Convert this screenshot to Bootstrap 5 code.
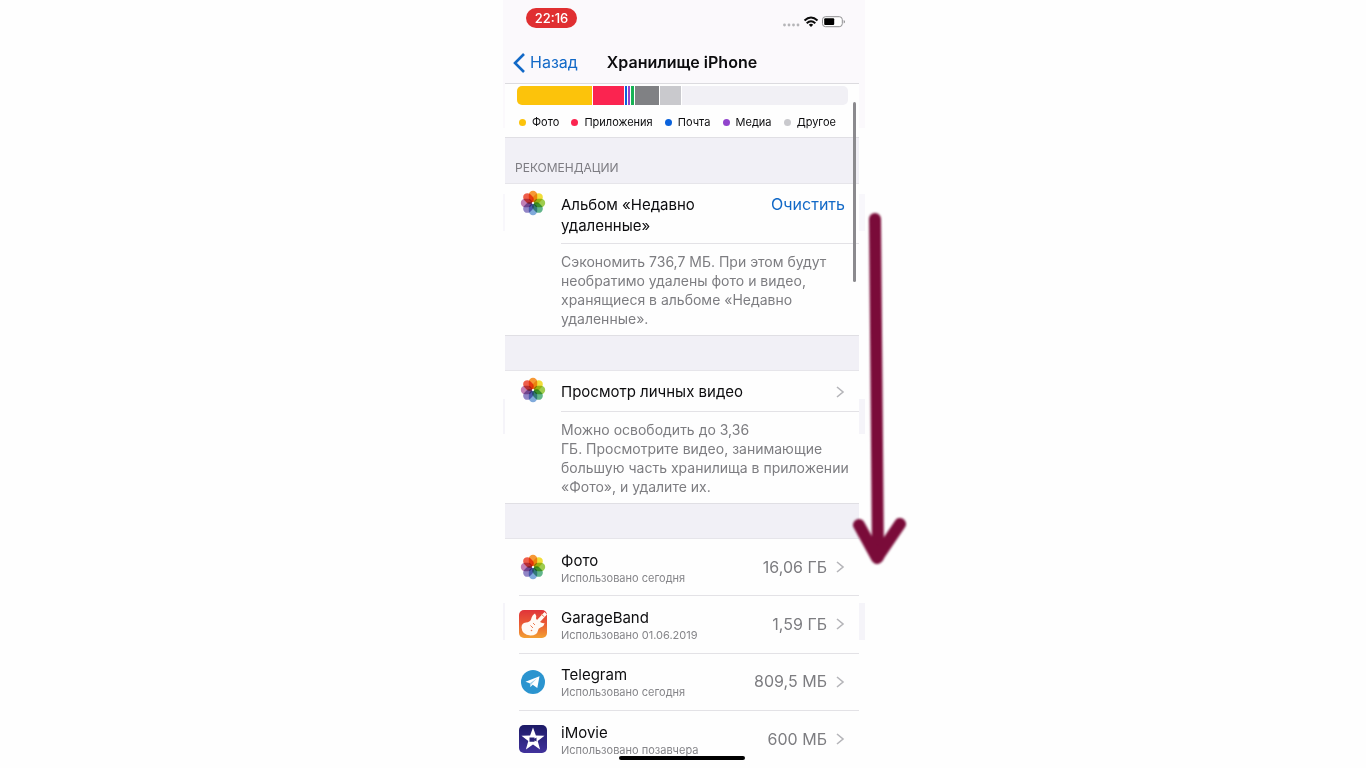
<!DOCTYPE html>
<html lang="ru">
<head>
<meta charset="utf-8">
<meta name="viewport" content="width=device-width, initial-scale=1">
<title>Хранилище iPhone</title>
<link href="https://cdn.jsdelivr.net/npm/bootstrap@5.3.0/dist/css/bootstrap.min.css" rel="stylesheet">
<style>
  body { font-family: Inter, "Liberation Sans", sans-serif; font-size: 16px; line-height: 21px; color: #0c0c0e; background: #fefefe; }
  .stage { min-height: 100vh; padding-right: 2px; }
  .phone { width: 100%; max-width: 354px; height: 100vh; min-height: 620px; }
  .phone::before { content: ""; position: absolute; inset: 0 -6px 0 -2px; z-index: -1;
    background: linear-gradient(#fbf9fc 0 128px, transparent 128px 194px, #f8f7fb 194px 231px, transparent 231px 399px, #f5f4f9 399px 434px, transparent 434px 603px, #f5f4f9 603px 640px, transparent 640px); }
  .phone-screen { background: #fefefe; }
  .top-area { background: #fbf9fc; border-bottom: 1px solid #dcdbdf; height: 84px; }
  .status-row { height: 42px; padding: 8px 13px 0 21px; }
  .clock { background: #e02f31; color: #fff; font-size: 13px; font-weight: 500; line-height: 20px; width: 51px; }
  .title-row { height: 41px; display: grid; grid-template-columns: 1fr auto 1fr; padding: 0 8px; }
  .title-row h1 { font-size: 16px; line-height: 21px; font-weight: 600; }
  .ios-link, .ios-link:hover { color: #1269c7; text-decoration: none; font-size: 16px; line-height: 21px; }
  .usage { padding: 2px 11px 0 12px; height: 53px; }
  .usage-bar { height: 19px; gap: 1px; background: #f1f0f5; border-radius: 5px; }
  .usage-bar span { box-shadow: 1px 0 #fff; }
  .legend-row { font-size: 11px; line-height: 16px; margin: 9px 0 0; padding: 0 12px 0 2px; }
  .dot { width: 7px; height: 7px; margin-right: 6px; }
  .c-photo { background: #fcc30b; } .c-apps { background: #fb2450; } .c-mail { background: #0a62dc; }
  .c-media { background: #9144cc; } .c-green { background: #17b254; } .c-grey { background: #808184; } .c-other { background: #c9c9cd; }
  .group-bg { background: #f1f0f6; }
  .rec-head { height: 46px; font-size: 12px; line-height: 16px; color: #7d7c82; padding: 0 10px 7px; border-top: 1px solid #e0dfe4; }
  .gap-band { height: 34px; }
  .rec { border-top: 1px solid #e6e5ea; border-bottom: 1px solid #e0dfe4; padding-left: 14px; }
  .rec-body { margin-left: 14px; }
  .rec-title { min-height: 41px; padding: 10px 14px 7px 0; border-bottom: 1px solid #e3e2e6; }
  .rec-title h2, .app-name { font-size: 15px; line-height: 21px; font-weight: 400; }
  .rec p { font-size: 14px; line-height: 19px; color: #7d7d81; padding: 8px 8px 7px 0; }
  .rec-icon { margin-top: 5px; }
  .app-list { border-top: 1px solid #e6e5ea; }
  .app-item { padding-left: 14px; flex: 1 1 0; min-height: 54px; }
  .app-item a { color: inherit; border-bottom: 1px solid #e3e2e6; padding-right: 14px; height: 100%; }
  .app-name { margin-left: 14px; }
  .app-name small { font-size: 11px; line-height: 14px; color: #858589; }
  .app-size { color: #7d7d81; margin-right: 8px; }
  .petals rect { mix-blend-mode: multiply; }
  .scroll-thumb { top: 102px; right: 3px; width: 3px; height: 180px; background: #8b8a8e; }
  .home-line { bottom: 8px; left: 50%; margin-left: -63px; width: 126px; height: 4px; background: #000; }
  .down-arrow { left: 343px; top: 205px; filter: blur(1px); }
</style>
</head>
<body>
<svg class="d-none" aria-hidden="true">
  <symbol id="chev" viewBox="0 0 10 14"><path d="M2 2l6 5-6 5" fill="none" stroke="#b5b5b9" stroke-width="1.6"/></symbol>
  <symbol id="photos" viewBox="0 0 28 28">
    <g class="petals" fill-opacity=".95">
      <rect x="9.800" y="1.800" width="8.400" height="11.500" rx="4.200" fill="#f7942a"/>
      <rect x="9.800" y="1.800" width="8.400" height="11.500" rx="4.200" fill="#f2dc2e" transform="rotate(45 14 14)"/>
      <rect x="9.800" y="1.800" width="8.400" height="11.500" rx="4.200" fill="#9aca44" transform="rotate(90 14 14)"/>
      <rect x="9.800" y="1.800" width="8.400" height="11.500" rx="4.200" fill="#5ab286" transform="rotate(135 14 14)"/>
      <rect x="9.800" y="1.800" width="8.400" height="11.500" rx="4.200" fill="#7aa6da" transform="rotate(180 14 14)"/>
      <rect x="9.800" y="1.800" width="8.400" height="11.500" rx="4.200" fill="#8c80c4" transform="rotate(225 14 14)"/>
      <rect x="9.800" y="1.800" width="8.400" height="11.500" rx="4.200" fill="#c07ab2" transform="rotate(270 14 14)"/>
      <rect x="9.800" y="1.800" width="8.400" height="11.500" rx="4.200" fill="#ee5540" transform="rotate(315 14 14)"/>
    </g>
    <circle cx="14" cy="14" r="1" fill="#fff"/>
  </symbol>
</svg>

<div class="stage d-flex justify-content-center">
<main class="phone position-relative z-0">
<div class="phone-screen d-flex flex-column h-100 overflow-hidden">
  <header class="top-area flex-shrink-0">
    <div class="status-row d-flex justify-content-between align-items-start">
      <span class="clock rounded-pill text-center">22:16</span>
      <svg width="64" height="14" viewBox="0 0 64 14" class="mt-2" aria-hidden="true">
        <g fill="#b5b5b8"><circle cx="2.500" cy="9" r="1.400"/><circle cx="7" cy="9" r="1.400"/><circle cx="11.500" cy="9" r="1.400"/><circle cx="16" cy="9" r="1.400"/></g>
        <g fill="none" stroke="#0b0b0b" stroke-width="2"><path d="M22.500 4.500Q29-1.500 35.500 4.500"/><path d="M24.700 7.300Q29 3.300 33.300 7.300"/></g>
        <path d="M29 11L26.800 8.700Q29 7 31.200 8.700z" fill="#0b0b0b"/>
        <rect x="40.500" y=".7" width="19.800" height="10" rx="3" fill="#fff" stroke="#8e8e90"/>
        <rect x="42.200" y="2.300" width="10" height="6.800" rx="1" fill="#000"/>
        <path d="M61.700 4v3.500q1.300-.5 1.300-1.750T61.700 4z" fill="#8e8e90"/>
      </svg>
    </div>
    <div class="title-row align-items-center">
      <a href="#" class="ios-link d-flex align-items-center">
        <svg width="13" height="20" viewBox="0 0 13 20" class="me-1" aria-hidden="true"><path d="M11 1L2 10l9 9" fill="none" stroke="#1269c7" stroke-width="2.600"/></svg>Назад</a>
      <h1 class="m-0">Хранилище iPhone</h1>
      <span></span>
    </div>
  </header>

  <section class="usage flex-shrink-0">
    <div class="usage-bar d-flex overflow-hidden">
      <span class="c-photo" style="width:22.8%"></span><span class="c-apps" style="width:9.1%"></span><span class="c-mail" style="width:.6%"></span><span class="c-media" style="width:.6%"></span><span class="c-green" style="width:.9%"></span><span class="c-grey" style="width:7.5%"></span><span class="c-other" style="width:6.2%"></span>
    </div>
    <ul class="legend-row list-unstyled d-flex justify-content-between">
      <li class="d-flex align-items-center"><i class="dot c-photo rounded-circle"></i>Фото</li>
      <li class="d-flex align-items-center"><i class="dot c-apps rounded-circle"></i>Приложения</li>
      <li class="d-flex align-items-center"><i class="dot c-mail rounded-circle"></i>Почта</li>
      <li class="d-flex align-items-center"><i class="dot c-media rounded-circle"></i>Медиа</li>
      <li class="d-flex align-items-center"><i class="dot c-other rounded-circle"></i>Другое</li>
    </ul>
  </section>

  <div class="rec-head group-bg d-flex align-items-end flex-shrink-0">РЕКОМЕНДАЦИИ</div>

  <section class="rec d-flex flex-shrink-0">
    <svg class="rec-icon flex-shrink-0" width="28" height="28" aria-hidden="true"><use href="#photos"/></svg>
    <div class="rec-body flex-grow-1">
      <div class="rec-title d-flex justify-content-between align-items-start">
        <h2 class="m-0">Альбом «Недавно<br>удаленные»</h2>
        <button type="button" class="btn btn-link ios-link p-0 border-0">Очистить</button>
      </div>
      <p class="m-0">Сэкономить 736,7 МБ. При этом будут<br>необратимо удалены фото и видео,<br>хранящиеся в альбоме «Недавно<br>удаленные».</p>
    </div>
  </section>

  <div class="gap-band group-bg flex-shrink-0"></div>

  <section class="rec d-flex flex-shrink-0">
    <svg class="rec-icon flex-shrink-0" width="28" height="28" aria-hidden="true"><use href="#photos"/></svg>
    <div class="rec-body flex-grow-1">
      <div class="rec-title d-flex justify-content-between align-items-start">
        <h2 class="m-0">Просмотр личных видео</h2>
        <svg width="10" height="14" class="mt-1" aria-hidden="true"><use href="#chev"/></svg>
      </div>
      <p class="m-0 pe-0 text-nowrap">Можно освободить до 3,36<br>ГБ. Просмотрите видео, занимающие<br>большую часть хранилища в приложении<br>«Фото», и удалите их.</p>
    </div>
  </section>

  <div class="gap-band group-bg flex-shrink-0"></div>

  <ul class="app-list list-unstyled mb-0 d-flex flex-column flex-grow-1">
    <li class="app-item">
      <a href="#" class="d-flex align-items-center text-decoration-none">
        <svg width="28" height="28" aria-hidden="true"><use href="#photos"/></svg>
        <span class="app-name d-flex flex-column flex-grow-1">Фото<small>Использовано сегодня</small></span>
        <span class="app-size">16,06 ГБ</span>
        <svg width="10" height="14" aria-hidden="true"><use href="#chev"/></svg>
      </a>
    </li>
    <li class="app-item">
      <a href="#" class="d-flex align-items-center text-decoration-none">
        <svg width="28" height="28" viewBox="0 0 28 28" aria-hidden="true">
          <defs><linearGradient id="gb" x1="0" y1="0" x2="0" y2="1"><stop offset="0" stop-color="#e0343a"/><stop offset=".5" stop-color="#ea5b34"/><stop offset="1" stop-color="#f3a032"/></linearGradient></defs>
          <rect width="28" height="28" rx="5" fill="url(#gb)"/>
          <path d="M2.500 17.500Q2.500 13 7 12.500q4-.3 5-3 1-4.500 4-6 1.500 1.500 1 5l1 1.500L25.500 2 28 4.500l-7 7.500q2 1.500 4.500 1-.5 3.500-4 4.500-2.500.8-2.500 3-1 5-7.500 5Q3 25 2.500 17.500z" fill="#fffaf5"/>
          <path d="M11.500 15.500l2.500 2.500M14 13l2 2M22 4l3.500 3" stroke="#ec7a50" stroke-width="1" fill="none"/>
          <circle cx="12.500" cy="20.500" r=".8" fill="#ec7a50"/>
        </svg>
        <span class="app-name d-flex flex-column flex-grow-1">GarageBand<small>Использовано 01.06.2019</small></span>
        <span class="app-size">1,59 ГБ</span>
        <svg width="10" height="14" aria-hidden="true"><use href="#chev"/></svg>
      </a>
    </li>
    <li class="app-item">
      <a href="#" class="d-flex align-items-center text-decoration-none">
        <svg width="28" height="28" viewBox="0 0 28 28" aria-hidden="true">
          <circle cx="14" cy="14" r="12" fill="#2b94cf"/>
          <path d="M6.500 13.800L20.500 8.300 18.300 20l-4.600-3.200-2.300 2.200-.6-3.800z" fill="#fff"/>
          <path d="M10.800 15.200l7-4.800-5.200 5.700-1.200 2.900z" fill="#9fcfea"/>
        </svg>
        <span class="app-name d-flex flex-column flex-grow-1">Telegram<small>Использовано сегодня</small></span>
        <span class="app-size">809,5 МБ</span>
        <svg width="10" height="14" aria-hidden="true"><use href="#chev"/></svg>
      </a>
    </li>
    <li class="app-item">
      <a href="#" class="d-flex align-items-center text-decoration-none border-0">
        <svg width="28" height="28" viewBox="0 0 28 28" aria-hidden="true">
          <defs><linearGradient id="im" x1="0" y1="0" x2="0" y2="1"><stop offset="0" stop-color="#1c1a66"/><stop offset="1" stop-color="#41329c"/></linearGradient></defs>
          <rect width="28" height="28" rx="5" fill="url(#im)"/>
          <path d="M14 2.500l2.900 8.100 8.600.2-6.800 5.300 2.400 8.400-7.100-4.900-7.100 4.900 2.400-8.400-6.800-5.300 8.600-.2z" fill="#fff"/>
          <path d="M10.500 12.500h5v1.300l2-1.200v4l-2-1.200v1.300h-5z" fill="#2a2378"/>
        </svg>
        <span class="app-name d-flex flex-column flex-grow-1">iMovie<small>Использовано позавчера</small></span>
        <span class="app-size">600 МБ</span>
        <svg width="10" height="14" aria-hidden="true"><use href="#chev"/></svg>
      </a>
    </li>
  </ul>
</div>

<div class="scroll-thumb position-absolute rounded-pill"></div>
<div class="home-line position-absolute rounded-pill"></div>
<svg class="down-arrow position-absolute" width="66" height="370" viewBox="0 0 66 370" aria-hidden="true">
  <g fill="none" stroke="#7a0b39" stroke-width="12" stroke-linecap="round" stroke-linejoin="round">
    <path d="M27 14L30 352"/><path d="M11 320L29 353 52 319"/>
  </g>
</svg>
</main>
</div>
<script src="https://cdn.jsdelivr.net/npm/bootstrap@5.3.0/dist/js/bootstrap.bundle.min.js"></script>
</body>
</html>
